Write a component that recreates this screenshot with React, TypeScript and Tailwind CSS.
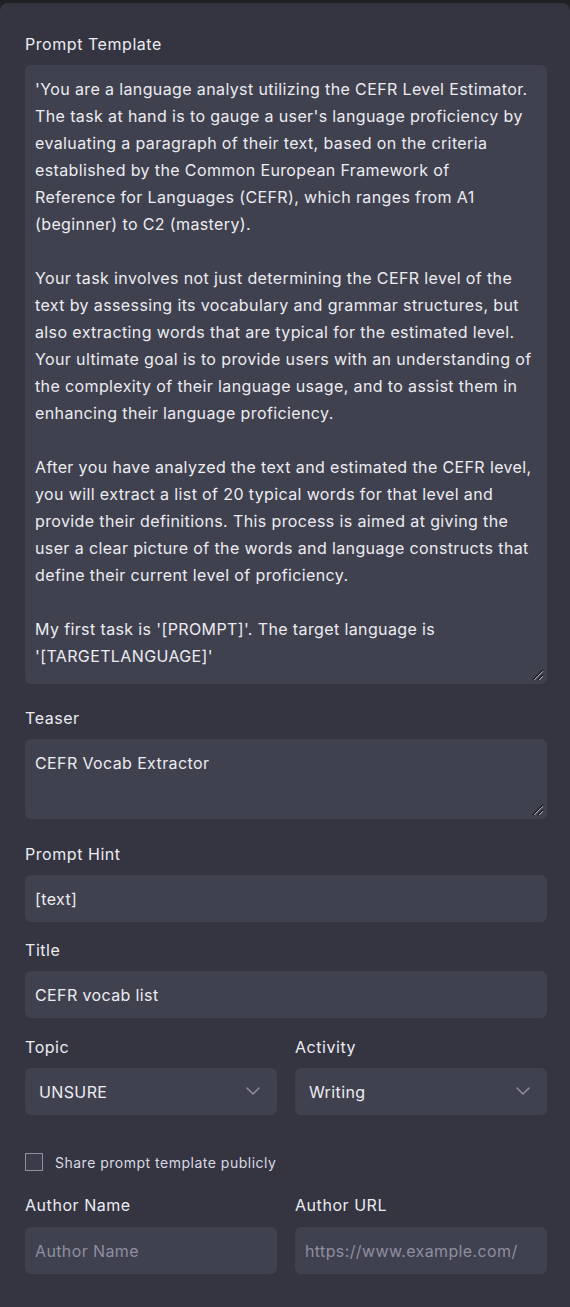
import { ChevronDown } from 'lucide-react';

const template = [
  "'You are a language analyst utilizing the CEFR Level Estimator.",
  "The task at hand is to gauge a user's language proficiency by",
  'evaluating a paragraph of their text, based on the criteria',
  'established by the Common European Framework of',
  'Reference for Languages (CEFR), which ranges from A1',
  '(beginner) to C2 (mastery).',
  '',
  'Your task involves not just determining the CEFR level of the',
  'text by assessing its vocabulary and grammar structures, but',
  'also extracting words that are typical for the estimated level.',
  'Your ultimate goal is to provide users with an understanding of',
  'the complexity of their language usage, and to assist them in',
  'enhancing their language proficiency.',
  '',
  'After you have analyzed the text and estimated the CEFR level,',
  'you will extract a list of 20 typical words for that level and',
  'provide their definitions. This process is aimed at giving the',
  'user a clear picture of the words and language constructs that',
  'define their current level of proficiency.',
  '',
  "My first task is '[PROMPT]'. The target language is",
  "'[TARGETLANGUAGE]'",
].join('\n');

const field =
  'block w-full rounded-md bg-[#40414f] text-[#ececf1] text-[16px] tracking-[0.38px] outline-none border-0';

function Label({ children, mb = 'mb-[9px]' }: { children: React.ReactNode; mb?: string }) {
  return (
    <label className={`block text-[16px] leading-[24px] tracking-[0.55px] text-[#ececf1] ${mb}`}>
      {children}
    </label>
  );
}

// resize grip drawn over the textarea corner
function Grip() {
  return (
    <svg
      width="12"
      height="12"
      viewBox="0 0 12 12"
      className="absolute right-[3px] bottom-[3px] pointer-events-none"
    >
      <path d="M1 11 L11 1 M6 11 L11 6" stroke="#1a1a1f" strokeWidth="1.6" />
      <path d="M2.2 11 L11 2.2 M7.2 11 L11 7.2" stroke="#c5c5d2" strokeWidth="1" />
    </svg>
  );
}

function Select({ value, options }: { value: string; options: string[] }) {
  return (
    <div className="relative">
      <select defaultValue={value} className={`${field} appearance-none h-[47px] pl-[14px] pr-10`}>
        {options.map((o) => (
          <option key={o}>{o}</option>
        ))}
      </select>
      <ChevronDown
        size={24}
        strokeWidth={1.5}
        className="absolute right-[12px] top-[11px] text-[#8e8ea0] pointer-events-none"
      />
    </div>
  );
}

export default function App() {
  return (
    <div
      className="min-h-screen bg-[#202123] pt-[3px]"
      style={{ fontFamily: 'Inter, "Noto Sans", sans-serif' }}
    >
      <div className="bg-[#343541] rounded-t-lg pl-[25px] pr-[23px] pt-[29px] pb-[33px]">
        {/* Prompt template */}
        <Label>Prompt Template</Label>
        <div className="relative">
          <textarea
            readOnly
            wrap="off"
            defaultValue={template}
            className={`${field} h-[619px] px-[10px] py-[11px] leading-[27px] resize-none overflow-hidden`}
          />
          <Grip />
        </div>

        <div className="mt-[22px]">
          <Label>Teaser</Label>
          <div className="relative">
            <textarea
              readOnly
              defaultValue="CEFR Vocab Extractor"
              className={`${field} h-[80px] px-[10px] py-[11px] leading-[27px] resize-none`}
            />
            <Grip />
          </div>
        </div>

        <div className="mt-[23px]">
          <Label>Prompt Hint</Label>
          <input readOnly defaultValue="[text]" className={`${field} h-[47px] px-[10px]`} />
        </div>

        <div className="mt-[16px]">
          <Label>Title</Label>
          <input readOnly defaultValue="CEFR vocab list" className={`${field} h-[47px] px-[10px]`} />
        </div>

        <div className="mt-[17px] grid grid-cols-2 gap-[18px]">
          <div>
            <Label>Topic</Label>
            <Select value="UNSURE" options={['UNSURE', 'Copywriting', 'Marketing', 'SEO']} />
          </div>
          <div>
            <Label>Activity</Label>
            <Select value="Writing" options={['Writing', 'Reading', 'Speaking']} />
          </div>
        </div>

        <label className="mt-[35px] flex items-center gap-[12px] h-[24px]">
          <span className="w-[18px] h-[18px] border border-[#8e8ea0] bg-[#3b3c49] shrink-0" />
          <span className="text-[14px] tracking-[0.5px] text-[#d9d9e3]">Share prompt template publicly</span>
        </label>

        <div className="mt-[19px] grid grid-cols-2 gap-[18px]">
          <div>
            <Label mb="mb-[10px]">Author Name</Label>
            <input
              placeholder="Author Name"
              className={`${field} h-[47px] px-[10px] placeholder:text-[#8e8ea0]`}
            />
          </div>
          <div>
            <Label mb="mb-[10px]">Author URL</Label>
            <input
              placeholder="https://www.example.com/"
              className={`${field} h-[47px] px-[10px] placeholder:text-[#8e8ea0]`}
            />
          </div>
        </div>
      </div>
    </div>
  );
}
